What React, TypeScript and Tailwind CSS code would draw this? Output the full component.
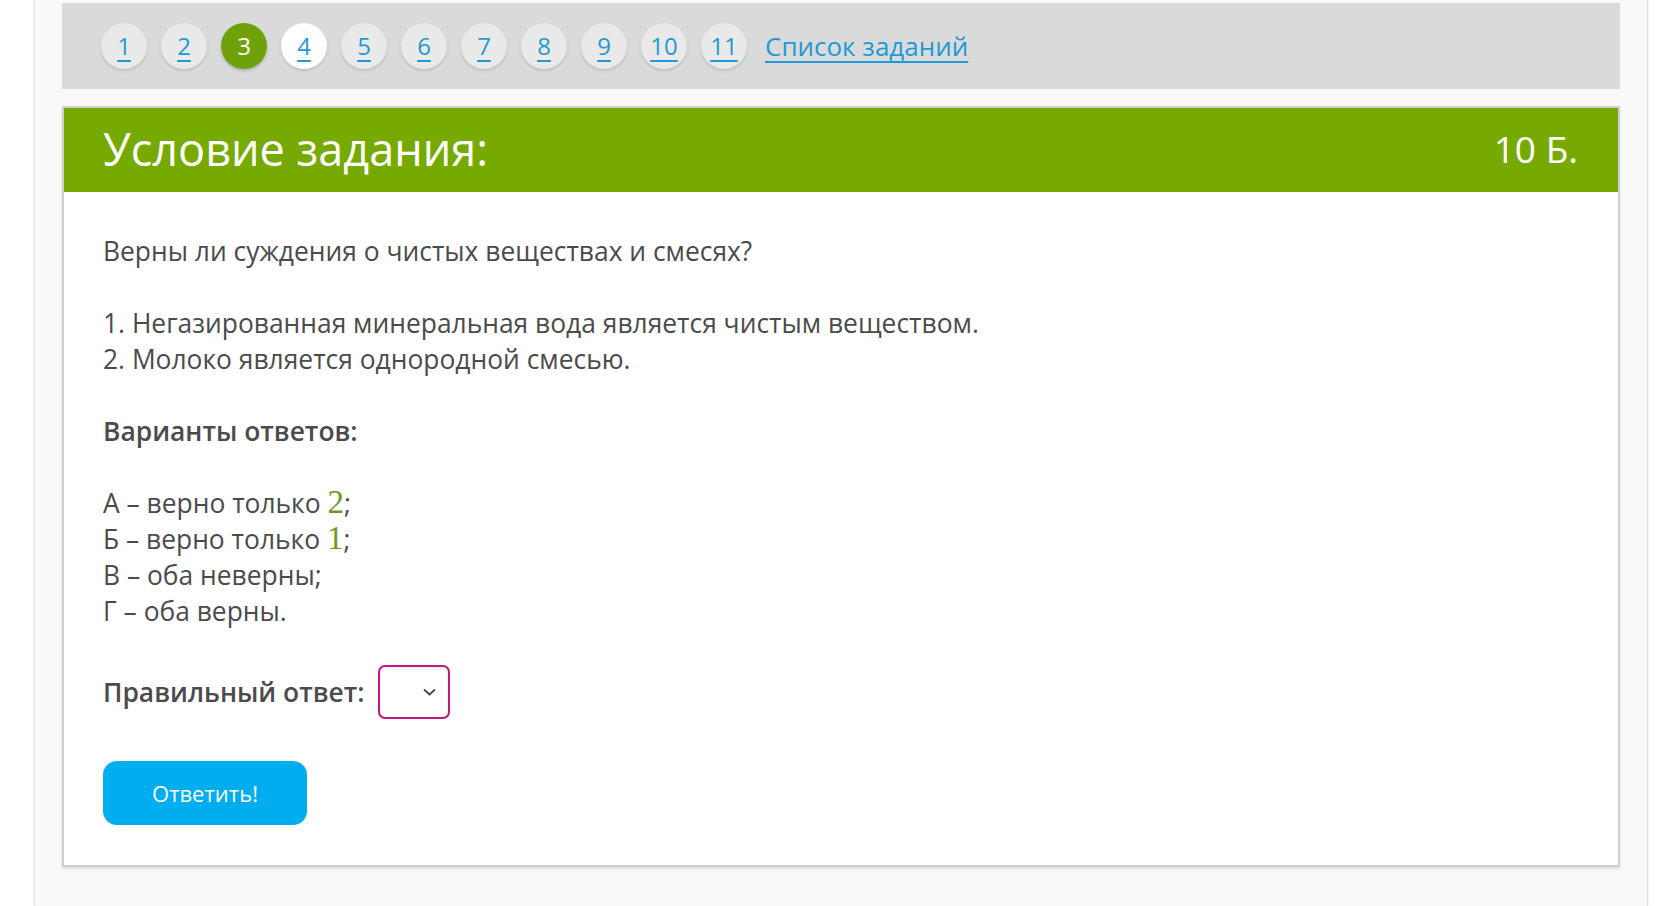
import React from "react";

const pages = ["1", "2", "3", "4", "5", "6", "7", "8", "9", "10", "11"];
const current = "3";
const visited = "4";

function PageCircle({ n }: { n: string }) {
  if (n === current) {
    return (
      <span className="flex h-[46px] w-[46px] items-center justify-center rounded-full bg-[#6fa10a] text-[24px] text-white shadow-[0_2px_3px_rgba(0,0,0,0.18)]">
        {n}
      </span>
    );
  }
  return (
    <a
      href="#"
      className={`flex h-[46px] w-[46px] items-center justify-center rounded-full text-[24px] text-[#1f9ad6] underline decoration-2 underline-offset-[5px] shadow-[0_2px_3px_rgba(0,0,0,0.12)] ${
        n === visited ? "bg-white" : "bg-[#e9e9e9]"
      }`}
    >
      {n}
    </a>
  );
}

function Num({ children }: { children: React.ReactNode }) {
  return (
    <span className="font-['Liberation_Serif',serif] text-[33px] font-medium leading-none text-[#6c9c1f]">
      {children}
    </span>
  );
}

export default function App() {
  return (
    <div className="min-h-screen bg-white font-['Open_Sans',sans-serif] text-[#4b4b4b]">
      <div className="ml-[34px] min-h-screen w-[1614px] border-x border-[#dedee2] bg-[#f9f9f9] px-[27px] pt-[3px] shadow-[0_0_4px_rgba(0,0,0,0.08)]">
        <nav className="flex h-[86px] items-center gap-[14px] bg-[#dadada] pl-[39px]">
          {pages.map((p) => (
            <PageCircle key={p} n={p} />
          ))}
          <a
            href="#"
            className="ml-[4px] text-[26px] text-[#1f9ad6] underline decoration-2 underline-offset-[5px]"
          >
            Список заданий
          </a>
        </nav>

        <section className="mt-[17px] border-2 border-[#cfcfcf] bg-white shadow-[0_2px_3px_rgba(0,0,0,0.1)]">
          <header className="flex h-[84px] items-center justify-between bg-[#77aa00] pb-[4px] pl-[39px] pr-[40px] text-white">
            <h1 className="text-[45px] leading-none">Условие задания:</h1>
            <span className="text-[37px] leading-none">10 Б.</span>
          </header>

          <div className="px-[39px] pb-[40px] pt-[41px] text-[26.4px] leading-[36px]">
            <p>Верны ли суждения о чистых веществах и смесях?</p>
            <br />
            <p>
              1. Негазированная минеральная вода является чистым веществом.
              <br />
              2. Молоко является однородной смесью.
            </p>
            <br />
            <p className="font-semibold">Варианты ответов:</p>
            <br />
            <p>
              А – верно только <Num>2</Num>;
              <br />
              Б – верно только <Num>1</Num>;
              <br />
              В – оба неверны;
              <br />
              Г – оба верны.
            </p>

            <div className="mt-[36px] flex items-center gap-[13px]">
              <span className="font-semibold">Правильный ответ:</span>
              <div className="flex h-[54px] w-[72px] items-center justify-end rounded-[7px] border-2 border-[#c2187d] bg-white pr-[12px] shadow-[inset_0_2px_3px_rgba(0,0,0,0.08)]">
                <svg width="13" height="8" viewBox="0 0 13 8" fill="none">
                  <path d="M1 1.5l5.5 5 5.5-5" stroke="#444" strokeWidth="1.8" />
                </svg>
              </div>
            </div>

            <button className="mt-[42px] flex h-[64px] w-[204px] items-center justify-center rounded-[14px] bg-[#00aeef] text-[22px] text-white">
              Ответить!
            </button>
          </div>
        </section>
      </div>
    </div>
  );
}
